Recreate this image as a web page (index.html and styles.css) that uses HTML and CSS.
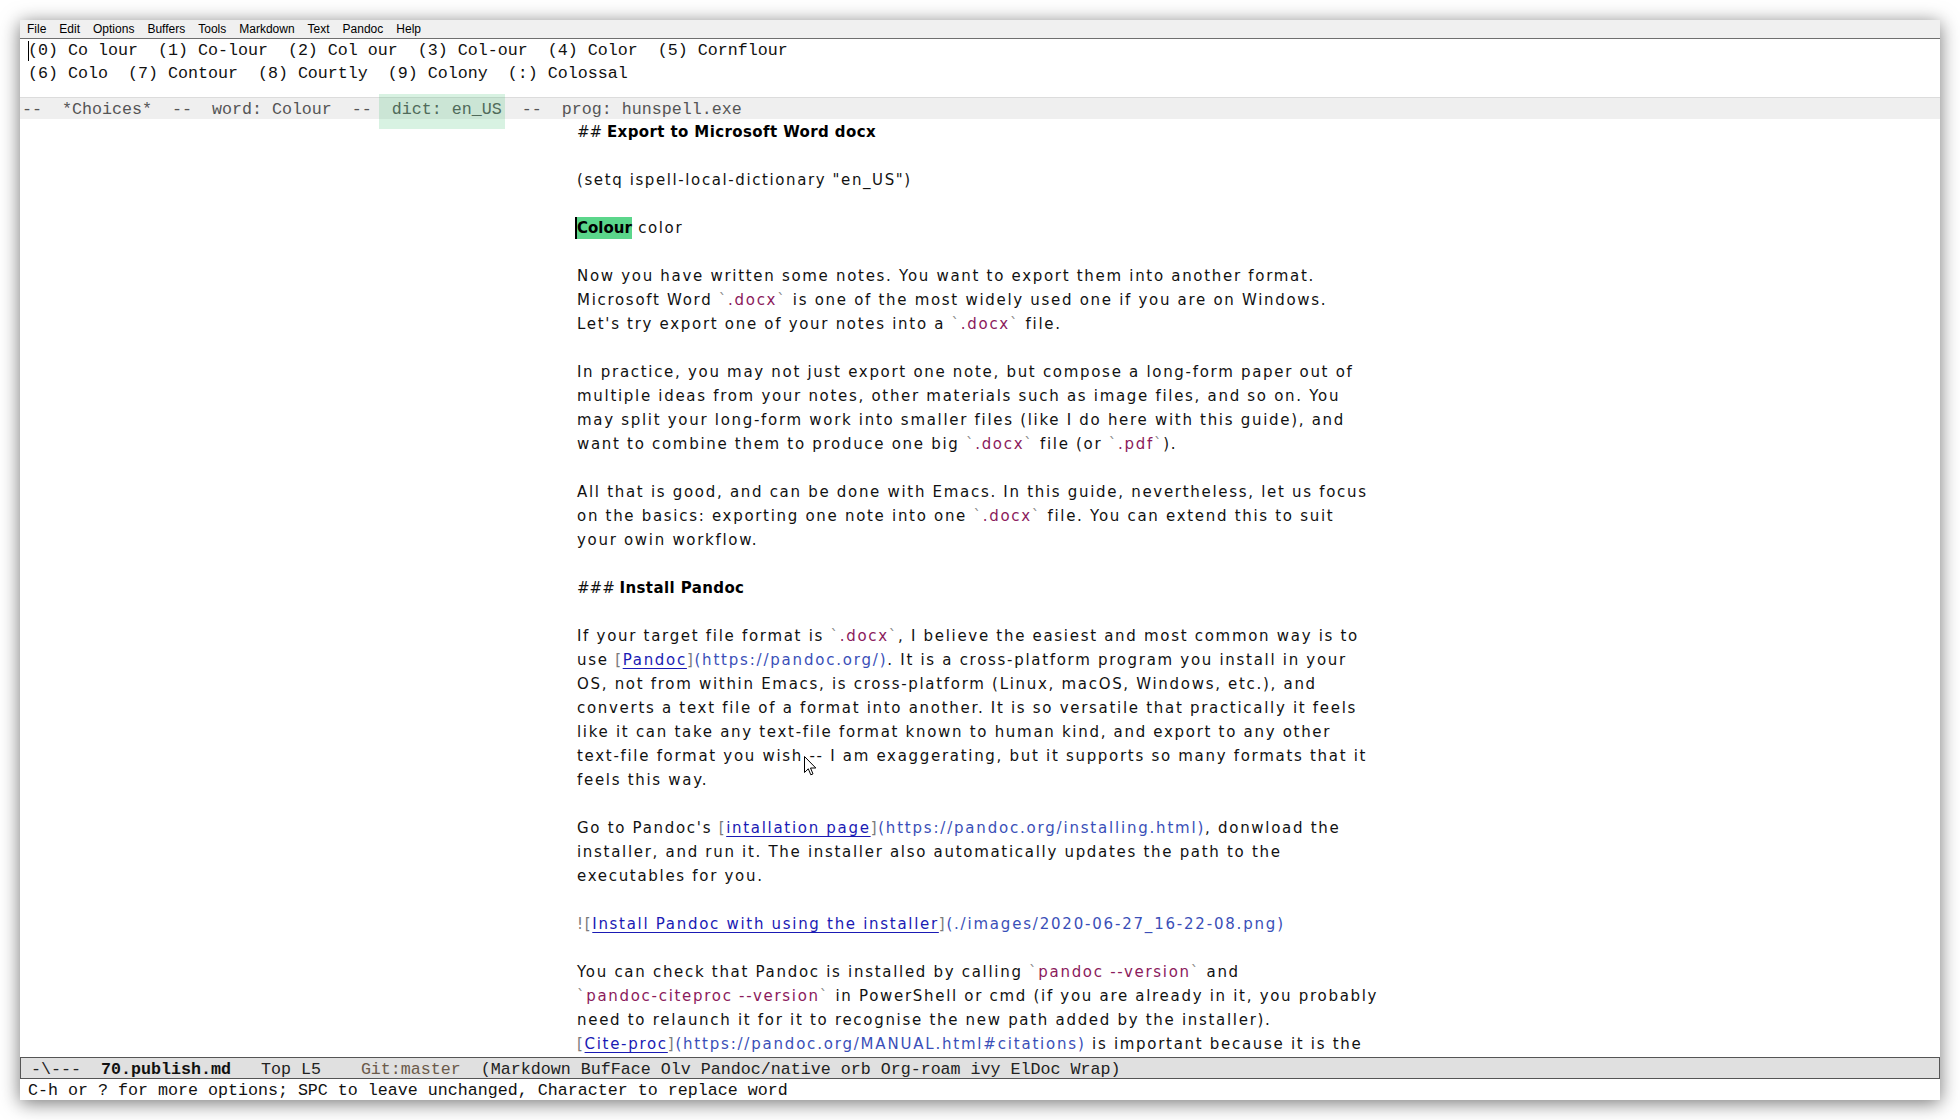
FILE: index.html
```html
<!DOCTYPE html>
<html>
<head>
<meta charset="utf-8">
<link rel="stylesheet" href="styles.css">
</head>
<body>
<div class="window">
  <div class="menubar">
    <span>File</span><span>Edit</span><span>Options</span><span>Buffers</span><span>Tools</span><span>Markdown</span><span>Text</span><span>Pandoc</span><span>Help</span>
  </div>
  <div class="choices">
    <div class="cline"><span class="tcursor"></span>(0) Co lour  (1) Co-lour  (2) Col our  (3) Col-our  (4) Color  (5) Cornflour</div>
    <div class="cline">(6) Colo  (7) Contour  (8) Courtly  (9) Colony  (:) Colossal</div>
  </div>
  <div class="cmodeline">--  *Choices*  --  word: Colour  --  dict: en_US  --  prog: hunspell.exe</div>
  <div class="buffer">
    <div class="ln"><span class="hm">## </span><b class="h">Export to Microsoft Word docx</b></div>
    <div class="ln"></div>
    <div class="ln vp">(setq ispell-local-dictionary "en_US")</div>
    <div class="ln"></div>
    <div class="ln vp"><b class="hl">Colour</b> color</div>
    <div class="ln"></div>
    <div class="ln">Now you have written some notes. You want to export them into another format.</div>
    <div class="ln">Microsoft Word <span class="bt">`</span><span class="code">.docx</span><span class="bt">`</span> is one of the most widely used one if you are on Windows.</div>
    <div class="ln">Let's try export one of your notes into a <span class="bt">`</span><span class="code">.docx</span><span class="bt">`</span> file.</div>
    <div class="ln"></div>
    <div class="ln">In practice, you may not just export one note, but compose a long-form paper out of</div>
    <div class="ln">multiple ideas from your notes, other materials such as image files, and so on. You</div>
    <div class="ln">may split your long-form work into smaller files (like I do here with this guide), and</div>
    <div class="ln">want to combine them to produce one big <span class="bt">`</span><span class="code">.docx</span><span class="bt">`</span> file (or <span class="bt">`</span><span class="code">.pdf</span><span class="bt">`</span>).</div>
    <div class="ln"></div>
    <div class="ln">All that is good, and can be done with Emacs. In this guide, nevertheless, let us focus</div>
    <div class="ln">on the basics: exporting one note into one <span class="bt">`</span><span class="code">.docx</span><span class="bt">`</span> file. You can extend this to suit</div>
    <div class="ln">your owin workflow.</div>
    <div class="ln"></div>
    <div class="ln"><span class="hm">### </span><b class="h">Install Pandoc</b></div>
    <div class="ln"></div>
    <div class="ln">If your target file format is <span class="bt">`</span><span class="code">.docx</span><span class="bt">`</span>, I believe the easiest and most common way is to</div>
    <div class="ln">use <span class="br">[</span><span class="lk">Pandoc</span><span class="br">]</span><span class="url">(https://pandoc.org/)</span>. It is a cross-platform program you install in your</div>
    <div class="ln">OS, not from within Emacs, is cross-platform (Linux, macOS, Windows, etc.), and</div>
    <div class="ln">converts a text file of a format into another. It is so versatile that practically it feels</div>
    <div class="ln">like it can take any text-file format known to human kind, and export to any other</div>
    <div class="ln">text-file format you wish -- I am exaggerating, but it supports so many formats that it</div>
    <div class="ln">feels this way.</div>
    <div class="ln"></div>
    <div class="ln">Go to Pandoc's <span class="br">[</span><span class="lk">intallation page</span><span class="br">]</span><span class="url">(https://pandoc.org/installing.html)</span>, donwload the</div>
    <div class="ln">installer, and run it. The installer also automatically updates the path to the</div>
    <div class="ln">executables for you.</div>
    <div class="ln"></div>
    <div class="ln"><span class="br">![</span><span class="lk">Install Pandoc with using the installer</span><span class="br">]</span><span class="url">(./images/2020-06-27_16-22-08.png)</span></div>
    <div class="ln"></div>
    <div class="ln">You can check that Pandoc is installed by calling <span class="bt">`</span><span class="code">pandoc --version</span><span class="bt">`</span> and</div>
    <div class="ln"><span class="bt">`</span><span class="code">pandoc-citeproc --version</span><span class="bt">`</span> in PowerShell or cmd (if you are already in it, you probably</div>
    <div class="ln">need to relaunch it for it to recognise the new path added by the installer).</div>
    <div class="ln"><span class="br">[</span><span class="lk">Cite-proc</span><span class="br">]</span><span class="url">(https://pandoc.org/MANUAL.html#citations)</span> is important because it is the</div>
  </div>
  <div class="modeline"><span>-\---  </span><b>70.publish.md</b><span>   Top L5    </span><span class="git">Git:master</span><span>  (Markdown BufFace Olv Pandoc/native orb Org-roam ivy ElDoc Wrap)</span></div>
  <div class="echo">C-h or ? for more options; SPC to leave unchanged, Character to replace word</div>

  <div class="dict-hl"></div>
  <svg class="pointer" width="13" height="21" viewBox="0 0 13 21">
    <path d="M0.5 0.5 L0.5 16.5 L4.3 12.8 L6.8 18.8 L9 17.9 L6.5 12 L11.8 12 Z" fill="#fff" stroke="#000" stroke-width="1" stroke-linejoin="miter"/>
  </svg>
</div>
</body>
</html>
```
FILE: styles.css
```css
html, body {
  margin: 0;
  padding: 0;
  background: #ffffff;
}
body {
  padding: 20px;
  width: 1920px;
  height: 1080px;
}
.window {
  position: relative;
  width: 1920px;
  height: 1080px;
  background: #ffffff;
  display: flex;
  flex-direction: column;
  box-shadow: 0 3px 18px rgba(0, 0, 0, 0.55);
  overflow: hidden;
}
.menubar {
  height: 18px;
  border-bottom: 1px solid #6f6f6f;
  background: #f0f0f0;
  display: flex;
  align-items: center;
  gap: 13px;
  padding-left: 7px;
  font-family: "Liberation Sans", Arial, sans-serif;
  font-size: 12px;
  color: #000;
}
.choices {
  height: 57px;
  padding-top: 1px;
  padding-left: 8px;
  font-family: "Liberation Mono", monospace;
  font-size: 16.67px;
  color: #111;
}
.cline {
  height: 22.5px;
  line-height: 22.5px;
  white-space: pre;
}
.tcursor {
  display: inline-block;
  width: 1px;
  height: 20px;
  background: #000;
  vertical-align: middle;
  margin-right: -1px;
}
.cmodeline {
  height: 20px;
  padding-top: 1px;
  line-height: 22px;
  border-top: 1px solid #dcdcdc;
  background: #efefef;
  padding-left: 2px;
  font-family: "Liberation Mono", monospace;
  font-size: 16.67px;
  color: #555;
  white-space: pre;
}
.buffer {
  flex: 1;
  min-height: 0;
  overflow: hidden;
  padding-top: 1px;
  padding-left: 557px;
  font-family: "DejaVu Sans", sans-serif;
  font-size: 15px;
  letter-spacing: 1.7px;
  color: #111;
}
.ln {
  height: 24px;
  line-height: 24px;
  white-space: pre;
}
.vp {
  letter-spacing: 1.6px;
}
.hm {
  letter-spacing: 0;
}
.h {
  font-weight: bold;
  letter-spacing: 0.4px;
  color: #000;
}
.hl {
  font-weight: bold;
  letter-spacing: 0;
  background: #5bd68b;
  color: #000;
  border-left: 2px solid #000;
  padding: 2px 0;
  margin-left: -2px;
}
.bt {
  color: #8a8a8a;
}
.code {
  color: #8b1a5c;
}
.br {
  color: #7a7a7a;
}
.lk {
  color: #1a1ab4;
  text-decoration: underline;
  text-underline-offset: 3px;
}
.url {
  color: #3a4fb8;
  letter-spacing: 1.8px;
}
.modeline {
  height: 18px;
  padding-top: 2px;
  line-height: 20px;
  border: 1px solid #555;
  background: #e0e0e0;
  padding-left: 10px;
  font-family: "Liberation Mono", monospace;
  font-size: 16.67px;
  color: #222;
  white-space: pre;
}
.modeline b {
  color: #111;
}
.git {
  color: #6b5a4a;
}
.echo {
  height: 20px;
  padding-top: 1px;
  line-height: 21px;
  padding-left: 8px;
  font-family: "Liberation Mono", monospace;
  font-size: 16.67px;
  color: #111;
  white-space: pre;
}
.dict-hl {
  position: absolute;
  left: 359px;
  top: 74px;
  width: 126px;
  height: 35px;
  background: rgba(60, 190, 110, 0.2);
  pointer-events: none;
}
.pointer {
  position: absolute;
  left: 784px;
  top: 736px;
}
```
